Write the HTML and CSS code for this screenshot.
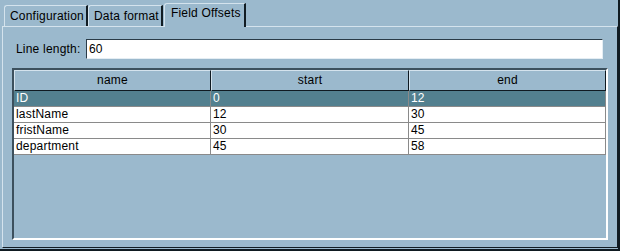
FILE: index.html
```html
<!DOCTYPE html>
<html lang="en">
  <head>
    <meta charset="UTF-8">
    <title>Field Offsets</title>
    <link rel="stylesheet" href="styles.css">
  </head>
  <body>
    <div class="window">
      <div class="tabs">
        <div class="tab">Configuration</div>
        <div class="tab">Data format</div>
        <div class="tab active">Field Offsets</div>
      </div>
      <div class="panel">
        <div class="line-row">
          <label class="line-label" for="line-length">Line length:</label>
          <input class="line-input" id="line-length" type="text" value="60">
        </div>
        <div class="scroll-pane">
          <div class="grid-head">
            <div class="head-cell">name</div>
            <div class="head-cell">start</div>
            <div class="head-cell">end</div>
          </div>
          <div class="grid-row selected">
            <div class="cell">ID</div>
            <div class="cell">0</div>
            <div class="cell">12</div>
          </div>
          <div class="grid-row">
            <div class="cell">lastName</div>
            <div class="cell">12</div>
            <div class="cell">30</div>
          </div>
          <div class="grid-row">
            <div class="cell">fristName</div>
            <div class="cell">30</div>
            <div class="cell">45</div>
          </div>
          <div class="grid-row">
            <div class="cell">department</div>
            <div class="cell">45</div>
            <div class="cell">58</div>
          </div>
        </div>
      </div>
    </div>
  </body>
</html>
```

FILE: styles.css
```css
body {
  margin: 0;
  background: #9bb9cd;
  font-family: "Liberation Sans", Arial, sans-serif;
  font-size: 12px;
  letter-spacing: 0.2px;
  color: #000;
}

.window {
  width: 618px;
  height: 249px;
  border-right: 2px solid #0f1a21;
  border-bottom: 2px solid #0f1a21;
  background: #9bb9cd;
}

.tabs {
  display: flex;
  align-items: flex-end;
  height: 26px;
  padding-left: 4px;
  position: relative;
  z-index: 1;
}

.tab {
  box-sizing: border-box;
  height: 21px;
  line-height: 20px;
  padding: 0 2px 0 5px;
  border-top: 1px solid #d4e3ed;
  border-left: 1px solid #d4e3ed;
  border-right: 2px solid #111c23;
  border-top-left-radius: 3px;
  white-space: nowrap;
}

.tab.active {
  height: 24px;
  line-height: 18px;
  margin-bottom: -1px;
  margin-left: 1px;
  padding: 0 3px 3px 6px;
  background: #9bb9cd;
}

.panel {
  box-sizing: border-box;
  margin-left: 2px;
  width: 616px;
  height: 222px;
  border-top: 1px solid #d4e3ed;
  border-left: 1px solid #d4e3ed;
  border-right: 1px solid #111c23;
  border-bottom: 1px solid #111c23;
  padding: 12px 9px 7px 9px;
  display: flex;
  flex-direction: column;
}

.line-row {
  display: flex;
  align-items: center;
  height: 20px;
  margin-bottom: 9px;
}

.line-label {
  padding-left: 4px;
  width: 70px;
}

.line-input {
  box-sizing: border-box;
  width: 517px;
  height: 20px;
  margin: 0;
  padding: 0 2px;
  font: inherit;
  color: #000;
  background: #fff;
  border-top: 1px solid #2a3b47;
  border-left: 1px solid #2a3b47;
  border-right: 1px solid #e4edf3;
  border-bottom: 1px solid #e4edf3;
  outline: none;
}

.scroll-pane {
  flex: 1;
  box-sizing: border-box;
  border-top: 2px solid #3c505d;
  border-left: 2px solid #3c505d;
  border-right: 2px solid #ffffff;
  border-bottom: 2px solid #ffffff;
}

.grid-head,
.grid-row {
  display: grid;
  grid-template-columns: 197px 198px 197px;
}

.head-cell {
  box-sizing: border-box;
  height: 21px;
  line-height: 19px;
  text-align: center;
  border-top: 1px solid #d4e3ed;
  border-left: 1px solid #d4e3ed;
  border-right: 1px solid #0f1a21;
  border-bottom: 1px solid #0f1a21;
}

.cell {
  box-sizing: border-box;
  height: 16px;
  line-height: 15px;
  padding-left: 2px;
  background: #fff;
  border-right: 1px solid #8a8a8a;
  border-bottom: 1px solid #8a8a8a;
  white-space: nowrap;
}

.selected .cell {
  background: #53808f;
  color: #fff;
}
```
